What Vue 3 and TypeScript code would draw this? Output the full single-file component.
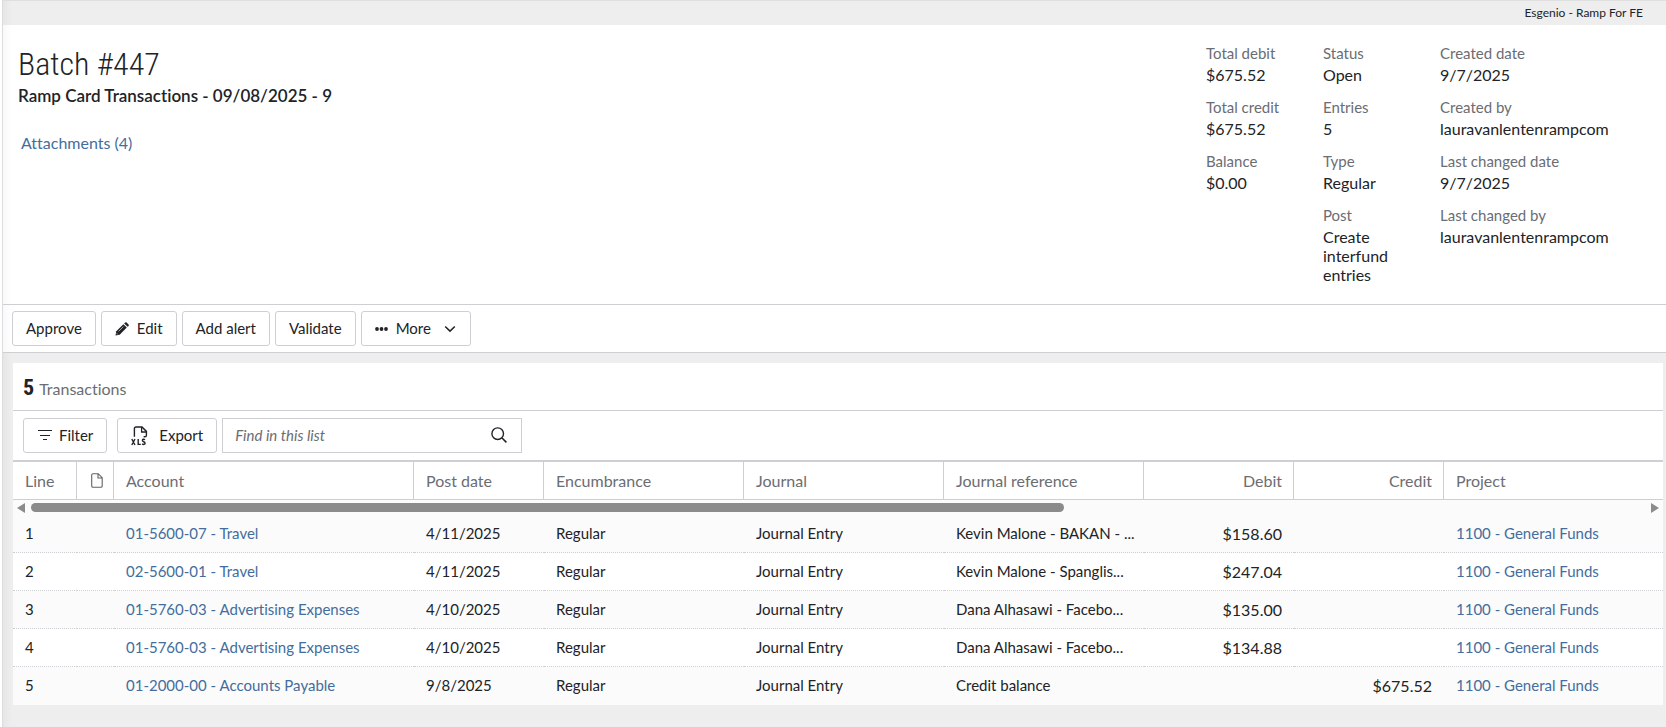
<script setup lang="ts">
import { ref } from 'vue'

interface Fact {
  label: string
  value: string
}

interface Transaction {
  line: number
  account: string
  postDate: string
  encumbrance: string
  journal: string
  reference: string
  debit: string
  credit: string
  project: string
}

const factColumns: Fact[][] = [
  [
    { label: 'Total debit', value: '$675.52' },
    { label: 'Total credit', value: '$675.52' },
    { label: 'Balance', value: '$0.00' },
  ],
  [
    { label: 'Status', value: 'Open' },
    { label: 'Entries', value: '5' },
    { label: 'Type', value: 'Regular' },
    { label: 'Post', value: 'Create interfund entries' },
  ],
  [
    { label: 'Created date', value: '9/7/2025' },
    { label: 'Created by', value: 'lauravanlentenrampcom' },
    { label: 'Last changed date', value: '9/7/2025' },
    { label: 'Last changed by', value: 'lauravanlentenrampcom' },
  ],
]

const project = '1100 - General Funds'

const transactions: Transaction[] = [
  { line: 1, account: '01-5600-07 - Travel', postDate: '4/11/2025', encumbrance: 'Regular', journal: 'Journal Entry', reference: 'Kevin Malone - BAKAN - ...', debit: '$158.60', credit: '', project },
  { line: 2, account: '02-5600-01 - Travel', postDate: '4/11/2025', encumbrance: 'Regular', journal: 'Journal Entry', reference: 'Kevin Malone - Spanglis...', debit: '$247.04', credit: '', project },
  { line: 3, account: '01-5760-03 - Advertising Expenses', postDate: '4/10/2025', encumbrance: 'Regular', journal: 'Journal Entry', reference: 'Dana Alhasawi - Facebo...', debit: '$135.00', credit: '', project },
  { line: 4, account: '01-5760-03 - Advertising Expenses', postDate: '4/10/2025', encumbrance: 'Regular', journal: 'Journal Entry', reference: 'Dana Alhasawi - Facebo...', debit: '$134.88', credit: '', project },
  { line: 5, account: '01-2000-00 - Accounts Payable', postDate: '9/8/2025', encumbrance: 'Regular', journal: 'Journal Entry', reference: 'Credit balance', debit: '', credit: '$675.52', project },
]

const query = ref('')
const visibleShare = ref(64)
</script>

<template>
  <div class="page">
    <div class="environment">Esgenio - Ramp For FE</div>

    <header class="batch">
      <div class="heading">
        <h1>Batch #447</h1>
        <p class="description">Ramp Card Transactions - 09/08/2025 - 9</p>
        <a class="attachments" href="#attachments">Attachments (4)</a>
      </div>
      <div class="facts">
        <dl v-for="(column, i) in factColumns" :key="i">
          <div v-for="fact in column" :key="fact.label" class="fact">
            <dt>{{ fact.label }}</dt>
            <dd>{{ fact.value }}</dd>
          </div>
        </dl>
      </div>
    </header>

    <nav class="actions">
      <button type="button">Approve</button>
      <button type="button">
        <svg class="pencil" width="14" height="14" viewBox="0 0 14 14" aria-hidden="true">
          <path d="M1.3 9.3 8.4 2.2l3.4 3.4-7.1 7.1L.5 13.6z" fill="#212327" />
          <path d="m9.2 1.4.9-.9a1.1 1.1 0 0 1 1.5 0l1.9 1.9a1.1 1.1 0 0 1 0 1.5l-.9.9z" fill="#212327" />
          <path d="M3.6 9.4 8.4 4.6M1.6 11.2l1.3 1.3" stroke="#fff" stroke-width=".6" fill="none" />
        </svg>
        Edit
      </button>
      <button type="button">Add alert</button>
      <button type="button">Validate</button>
      <button type="button">
        <svg class="dots" width="13" height="4" viewBox="0 0 13 4" aria-hidden="true">
          <g fill="#212327"><circle cx="2" cy="2" r="1.9" /><circle cx="6.5" cy="2" r="1.9" /><circle cx="11" cy="2" r="1.9" /></g>
        </svg>
        More
        <svg class="chevron" width="12" height="8" viewBox="0 0 12 8" aria-hidden="true">
          <path d="m1.2 1.5 4.8 4.6 4.8-4.6" fill="none" stroke="#212327" stroke-width="1.5" />
        </svg>
      </button>
    </nav>

    <main>
      <section class="panel">
        <h2><strong>5</strong> <span>Transactions</span></h2>

        <div class="tools">
          <button type="button" class="filter">
            <svg width="14" height="11" viewBox="0 0 14 11" aria-hidden="true">
              <path d="M0 .5h14M2 5.5h10M5 9.5h4" stroke="#212327" />
            </svg>
            Filter
          </button>
          <button type="button" class="export">
            <svg width="17" height="20" viewBox="0 0 17 20" aria-hidden="true">
              <path d="M3.4 10.8V2.6Q3.4 1 5 1h6l4.4 4.4v3.8q0 1.6-1.6 1.6h-1.2" fill="none" stroke="#212327" stroke-width="1.4" />
              <path d="M10.6 1v5h4.8" fill="none" stroke="#212327" stroke-width="1.3" />
              <path d="m.8 13 3.2 6M4 13 .8 19M7.2 13v5.4h2.6M14 13.7c-1.1-.8-2.6-.6-2.6.7 0 1.5 2.7 1.2 2.7 2.8 0 1.4-1.8 1.6-3 .7" fill="none" stroke="#212327" stroke-width="1.4" />
            </svg>
            Export
          </button>
          <div class="search">
            <input v-model="query" type="text" placeholder="Find in this list" aria-label="Find in this list" />
            <button type="button" aria-label="Search">
              <svg width="16" height="16" viewBox="0 0 16 16" aria-hidden="true">
                <circle cx="6.7" cy="6.7" r="5.8" fill="none" stroke="#212327" stroke-width="1.4" />
                <path d="m10.8 10.8 4.6 4.6" stroke="#212327" stroke-width="1.6" />
              </svg>
            </button>
          </div>
        </div>

        <table>
          <colgroup>
            <col class="w-line" /><col class="w-file" /><col class="w-account" /><col class="w-date" />
            <col class="w-text" /><col class="w-text" /><col class="w-text" />
            <col class="w-money" /><col class="w-money" /><col />
          </colgroup>
          <thead>
            <tr>
              <th>Line</th>
              <th class="file" aria-label="Attachments">
                <svg width="12" height="15" viewBox="0 0 12 15" aria-hidden="true">
                  <path d="M2 .7h5.2l4 4V13q0 1.3-1.3 1.3H2Q.7 14.3.7 13V2Q.7.7 2 .7zM7 .7V5h4.2" fill="none" stroke="#5f6368" stroke-width="1.1" />
                </svg>
              </th>
              <th>Account</th>
              <th>Post date</th>
              <th>Encumbrance</th>
              <th>Journal</th>
              <th>Journal reference</th>
              <th class="money">Debit</th>
              <th class="money">Credit</th>
              <th>Project</th>
            </tr>
          </thead>
          <tbody>
            <tr class="scroll-row">
              <td colspan="10">
                <div class="scrollbar">
                  <svg width="8" height="10" viewBox="0 0 8 10" aria-hidden="true"><path d="M8 0v10L0 5z" fill="#8b8b8b" /></svg>
                  <div class="track"><div class="thumb" :style="{ width: visibleShare + '%' }"></div></div>
                  <svg width="8" height="10" viewBox="0 0 8 10" aria-hidden="true"><path d="M0 0v10l8-5z" fill="#8b8b8b" /></svg>
                </div>
              </td>
            </tr>
            <tr v-for="row in transactions" :key="row.line" class="entry">
              <td>{{ row.line }}</td>
              <td></td>
              <td><a href="#account">{{ row.account }}</a></td>
              <td>{{ row.postDate }}</td>
              <td>{{ row.encumbrance }}</td>
              <td>{{ row.journal }}</td>
              <td>{{ row.reference }}</td>
              <td class="money">{{ row.debit }}</td>
              <td class="money">{{ row.credit }}</td>
              <td><a href="#project">{{ row.project }}</a></td>
            </tr>
          </tbody>
        </table>
      </section>
    </main>
  </div>
</template>

<style>
body {
  margin: 0;
  background: #fff;
}
</style>

<style scoped>
* {
  box-sizing: border-box;
}

.page {
  display: flex;
  flex-direction: column;
  min-height: 100vh;
  margin-left: 2px;
  border-left: 1px solid #dcdcdc;
  border-top: 1px solid #dfdfdf;
  background: linear-gradient(to right, #e6e6e6, #eee 9px);
  color: #212327;
  font-family: Lato, "Open Sans", sans-serif;
  font-size: 16px;
  font-variant-ligatures: none;
  line-height: 19px;
}

a {
  color: #436d9d;
  text-decoration: none;
}

button,
input {
  color: inherit;
  font: inherit;
  font-size: 15px;
}

.environment {
  height: 24px;
  padding-right: 23px;
  font-size: 12px;
  line-height: 24px;
  text-align: right;
}

.batch {
  display: flex;
  justify-content: space-between;
  padding: 19px 58px 20px 15px;
  background: linear-gradient(to right, #f9f9f9, #fff 9px);
}

h1 {
  margin: 0;
  font-family: "Liberation Sans Narrow", "Roboto Condensed", Lato, sans-serif;
  font-size: 32px;
  font-weight: 300;
  line-height: 40px;
}

.description {
  margin: 2px 0 0;
  font-size: 17px;
  font-weight: 600;
}

.attachments {
  display: inline-block;
  margin: 28px 0 0 3px;
}

.facts {
  display: grid;
  grid-template-columns: 85px 85px 168px;
  column-gap: 32px;
}

dl {
  margin: 0;
}

.fact {
  margin-bottom: 14px;
}

.fact:last-child {
  margin-bottom: 0;
}

dt {
  margin-bottom: 2px;
  color: #6b6d72;
  font-size: 15px;
}

dd {
  margin: 0;
}

.actions {
  display: flex;
  gap: 5px;
  padding: 6px 9px;
  border: solid #cdcfd2;
  border-width: 1px 0;
  background: linear-gradient(to right, #f9f9f9, #fff 9px);
}

.actions button,
.filter,
.export {
  display: flex;
  align-items: center;
  height: 35px;
  padding: 0 13px;
  border: 1px solid #cdcfd2;
  border-radius: 3px;
  background: #fff;
  white-space: nowrap;
}

.pencil {
  margin-right: 8px;
}

.dots {
  margin-right: 8px;
}

.chevron {
  margin: 0 1px 0 13px;
}

main {
  padding: 10px 3px 22px 10px;
}

.panel {
  background: #fff;
}

h2 {
  display: flex;
  align-items: baseline;
  gap: 5px;
  height: 48px;
  margin: 0;
  padding: 10px 10px 0;
  border-bottom: 1px solid #cdcfd2;
  font-size: 16px;
  font-weight: 400;
  line-height: 30px;
}

h2 strong {
  font-family: "Liberation Sans Narrow", "Roboto Condensed", Lato, sans-serif;
  font-size: 22px;
}

h2 span {
  color: #6b6d72;
}

.tools {
  display: flex;
  padding: 7px 10px;
}

.filter svg {
  margin: 0 7px 0 1px;
}

.export {
  margin: 0 5px 0 10px;
}

.export svg {
  margin-right: 11px;
}

.search {
  display: flex;
  flex: 0 1 300px;
  height: 35px;
  border: 1px solid #cdcfd2;
}

.search input {
  flex: 1;
  min-width: 0;
  padding: 0 12px;
  border: 0;
  outline: 0;
  background: transparent;
}

.search input::placeholder {
  color: #6b6d72;
  font-style: italic;
  opacity: 1;
}

.search button {
  display: flex;
  align-items: center;
  padding: 0 14px 2px;
  border: 0;
  background: transparent;
}

table {
  width: 100%;
  border-top: 2px solid #cdcfd2;
  border-collapse: separate;
  border-spacing: 0;
  table-layout: fixed;
}

.w-line { width: 64px; }
.w-file { width: 37px; }
.w-account { width: 300px; }
.w-date { width: 130px; }
.w-text { width: 200px; }
.w-money { width: 150px; }

th {
  height: 38px;
  padding: 0 11px 0 12px;
  border-right: 1px solid #cdcfd2;
  border-bottom: 1px solid #cdcfd2;
  color: #6b6d72;
  font-weight: 400;
  text-align: left;
}

th:last-child {
  border-right: 0;
}

.file svg {
  display: block;
  margin-left: 2px;
}

.entry td {
  height: 38px;
  padding: 0 12px;
  border-bottom: 1px dotted #cdcfd2;
  font-size: 15px;
  white-space: nowrap;
}

.entry:last-child td {
  border-bottom-color: transparent;
}

.entry:nth-child(even) td,
.scroll-row td {
  background: #fbfbfb;
}

th.money,
.entry td.money {
  font-size: 16px;
  text-align: right;
}

.scroll-row td {
  padding: 0;
}

.scrollbar {
  display: flex;
  align-items: center;
  gap: 6px;
  height: 15px;
  padding: 0 4px;
}

.track {
  flex: 1;
}

.thumb {
  height: 9px;
  border-radius: 5px;
  background: #8b8b8b;
}
</style>
